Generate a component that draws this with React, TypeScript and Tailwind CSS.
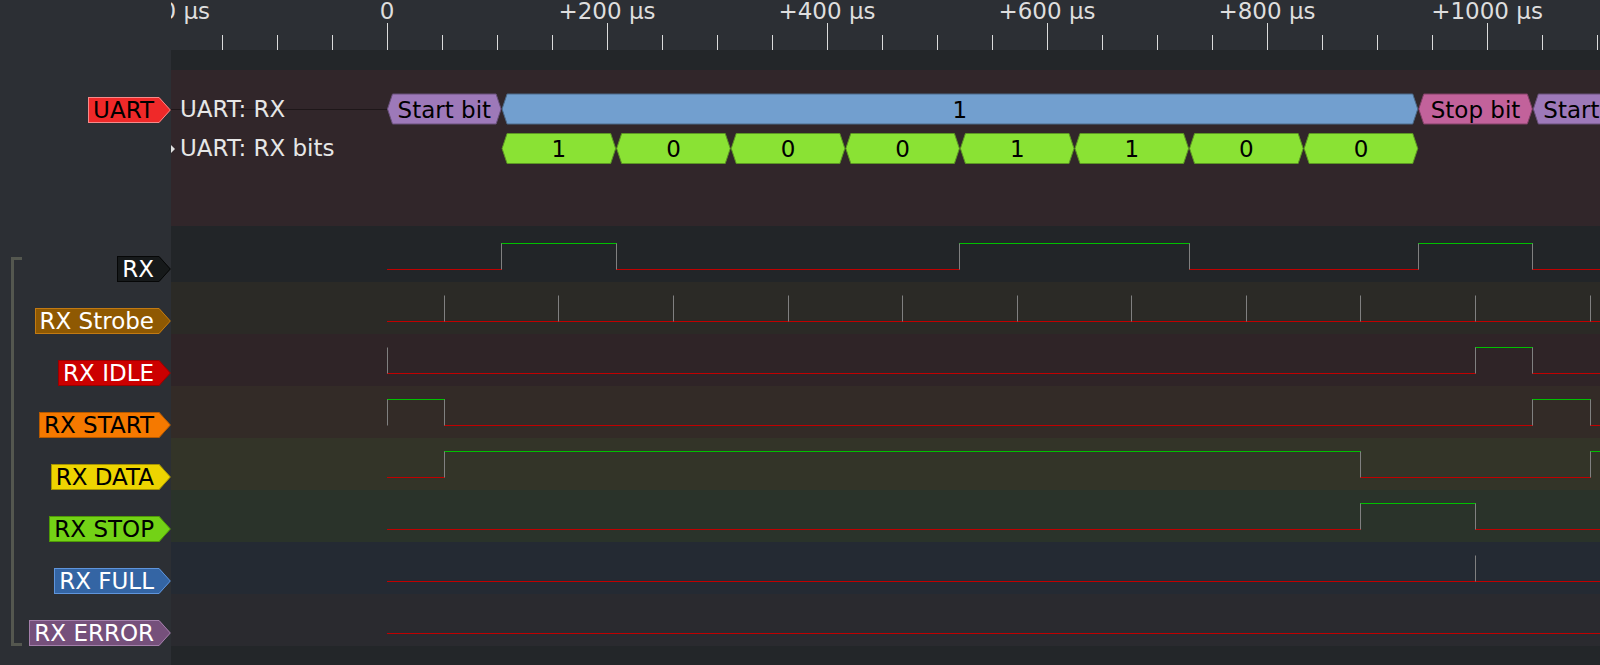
import React from 'react'

// time base: 0 µs at x=387, 1.1 px per µs, 9600 baud
const X0 = 387
const T = 114.583
const bx = (k: number) => X0 + k * T
const sx = (k: number) => X0 + T / 2 + k * T
const px = (x: number) => Math.floor(x) + 0.5
const END = 1600

type Level = [number, 0 | 1]

type Signal = {
    name: string
    fill: string
    border: string
    text: string
    rowBg: string
    h: number
    levels: Level[]
    edges?: number[]
}

const signals: Signal[] = [
    {
        name: 'RX', fill: 'bg-[#16191a]', border: 'border-[#060707]', text: 'text-white', rowBg: 'bg-[#222528]', h: 56,
        levels: [[X0, 0], [bx(1), 1], [bx(2), 0], [bx(5), 1], [bx(7), 0], [bx(9), 1], [bx(10), 0]],
    },
    {
        name: 'RX Strobe', fill: 'bg-[#8f5902]', border: 'border-[#c27a12]', text: 'text-white', rowBg: 'bg-[#2b2a26]', h: 52,
        levels: [[X0, 0]], edges: Array.from({ length: 11 }, (_, i) => sx(i)),
    },
    {
        name: 'RX IDLE', fill: 'bg-[#cc0000]', border: 'border-[#990000]', text: 'text-white', rowBg: 'bg-[#2f2427]', h: 52,
        levels: [[X0, 0], [sx(9), 1], [bx(10), 0]], edges: [X0],
    },
    {
        name: 'RX START', fill: 'bg-[#f57900]', border: 'border-[#b85a00]', text: 'text-black', rowBg: 'bg-[#332b27]', h: 52,
        levels: [[X0, 1], [sx(0), 0], [bx(10), 1], [sx(10), 0]], edges: [X0],
    },
    {
        name: 'RX DATA', fill: 'bg-[#edd400]', border: 'border-[#a69400]', text: 'text-black', rowBg: 'bg-[#333428]', h: 52,
        levels: [[X0, 0], [sx(0), 1], [sx(8), 0], [sx(10), 1]],
    },
    {
        name: 'RX STOP', fill: 'bg-[#73d216]', border: 'border-[#4e9a06]', text: 'text-black', rowBg: 'bg-[#2a332a]', h: 52,
        levels: [[X0, 0], [sx(8), 1], [sx(9), 0]],
    },
    {
        name: 'RX FULL', fill: 'bg-[#3465a4]', border: 'border-[#5f95dc]', text: 'text-white', rowBg: 'bg-[#242a33]', h: 52,
        levels: [[X0, 0]], edges: [sx(9)],
    },
    {
        name: 'RX ERROR', fill: 'bg-[#75507b]', border: 'border-[#a47fab]', text: 'text-white', rowBg: 'bg-[#2a2a2f]', h: 52,
        levels: [[X0, 0]],
    },
]

const Label: React.FC<{ name: string; fill: string; border: string; text: string; arrow: string; stroke: string }> = ({ name, fill, border, text, arrow, stroke }) => (
    <div className="flex h-[26px]">
        <div className={`flex items-center border border-r-0 pl-[4px] pr-[5px] text-[23px] leading-[23px] ${fill} ${border} ${text}`}>
            {name}
        </div>
        <svg width="12" height="26" viewBox="0 0 12 26" className="block">
            <polygon points="0,0 11.5,13 0,26" fill={arrow} />
            <polyline points="0,0.5 11.3,13 0,25.5" fill="none" stroke={stroke} strokeWidth="1" />
        </svg>
    </div>
)

const hexColour: Record<string, [string, string]> = {
    'bg-[#16191a]': ['#16191a', '#060707'],
    'bg-[#8f5902]': ['#8f5902', '#c27a12'],
    'bg-[#cc0000]': ['#cc0000', '#990000'],
    'bg-[#f57900]': ['#f57900', '#b85a00'],
    'bg-[#edd400]': ['#edd400', '#a69400'],
    'bg-[#73d216]': ['#73d216', '#4e9a06'],
    'bg-[#3465a4]': ['#3465a4', '#5f95dc'],
    'bg-[#75507b]': ['#75507b', '#a47fab'],
}

const Wave: React.FC<{ s: Signal }> = ({ s }) => {
    const lo = s.h - 13 + 0.5
    const hi = s.h - 39 + 0.5
    const lines: React.ReactNode[] = []
    s.levels.forEach(([x, lvl], i) => {
        const x1 = i + 1 < s.levels.length ? s.levels[i + 1][0] : END
        const y = lvl ? hi : lo
        lines.push(<line key={'l' + i} x1={Math.floor(x)} x2={Math.floor(x1) + 1} y1={y} y2={y} stroke={lvl ? '#00c000' : '#c00000'} />)
        if (i > 0) lines.push(<line key={'e' + i} x1={px(x)} x2={px(x)} y1={hi} y2={lo} stroke="#808080" />)
    })
    ;(s.edges ?? []).forEach((x, i) => {
        lines.push(<line key={'s' + i} x1={px(x)} x2={px(x)} y1={hi} y2={lo} stroke="#808080" />)
    })
    return (
        <svg width="1429" height={s.h} viewBox={`171 0 1429 ${s.h}`} className="block">
            {lines}
        </svg>
    )
}

type Ann = { x0: number; x1: number; label: string; fill: string; stroke: string }

const row1: Ann[] = [
    { x0: bx(0), x1: bx(1), label: 'Start bit', fill: '#9d79b9', stroke: '#69517b' },
    { x0: bx(1), x1: bx(9), label: '1', fill: '#729fcf', stroke: '#4c6a8a' },
    { x0: bx(9), x1: bx(10), label: 'Stop bit', fill: '#c2629b', stroke: '#814167' },
    { x0: bx(10), x1: bx(11), label: 'Start bit', fill: '#9d79b9', stroke: '#69517b' },
]

const bits = [1, 0, 0, 0, 1, 1, 0, 0]
const row2: Ann[] = bits.map((b, i) => ({ x0: bx(1 + i), x1: bx(2 + i), label: String(b), fill: '#8ae234', stroke: '#5c9723' }))

const Annotation: React.FC<{ a: Ann; cy: number }> = ({ a, cy }) => {
    const l = a.x0 + 0.5
    const r = a.x1 - 0.5
    const t = cy - 15
    const b = cy + 15
    return (
        <g>
            <polygon
                points={`${l},${cy} ${l + 5},${t} ${r - 5},${t} ${r},${cy} ${r - 5},${b} ${l + 5},${b}`}
                fill={a.fill}
                stroke={a.stroke}
                strokeWidth="1"
            />
            <text x={(a.x0 + a.x1) / 2} y={cy + 8.5} textAnchor="middle" fontSize="23" fill="#000" fontFamily="DejaVu Sans">
                {a.label}
            </text>
        </g>
    )
}

const ticks = Array.from({ length: 27 }, (_, i) => i - 4)
const majors = ticks.filter((k) => k % 4 === 0)
const tickLabel = (k: number) => (k === 0 ? '0' : k < 0 ? `-${(-k / 4) * 200} µs` : `+${(k / 4) * 200} µs`)

const App: React.FC = () => {
    return (
        <div className="flex h-[665px] w-[1600px] overflow-hidden bg-[#2c2f34] font-['DejaVu_Sans',sans-serif]">
            {/* header column */}
            <div className="flex w-[171px] shrink-0 flex-col">
                <div className="h-[70px]" />
                <div className="flex h-[156px] justify-end pt-[27px]">
                    <Label name="UART" fill="bg-[#ef2929]" border="border-[#f68a8a]" text="text-black" arrow="#ef2929" stroke="#f68a8a" />
                </div>
                <div className="flex">
                    <div className="mt-[31px] ml-[11px] h-[389px] w-[11px] border-t-[3px] border-b-[3px] border-l-[3px] border-[#54574f]" />
                    <div className="flex flex-1 flex-col">
                        {signals.map((s) => (
                            <div key={s.name} className={`flex items-end justify-end ${s.h === 56 ? 'h-[56px]' : 'h-[52px]'}`}>
                                <Label name={s.name} fill={s.fill} border={s.border} text={s.text} arrow={hexColour[s.fill][0]} stroke={hexColour[s.fill][1]} />
                            </div>
                        ))}
                    </div>
                </div>
            </div>

            {/* trace area */}
            <div className="flex flex-1 flex-col">
                <div className="relative h-[50px] overflow-hidden">
                    <svg width="1429" height="50" viewBox="171 0 1429 50" className="absolute inset-0 block">
                        {ticks.map((k) => {
                            const x = px(X0 + 55 * k)
                            const major = k % 4 === 0
                            return <line key={k} x1={x} x2={x} y1={major ? 23 : 35} y2={50} stroke="#dcdcdc" />
                        })}
                    </svg>
                    {majors.map((k) => (
                        <span
                            key={k}
                            className="absolute top-0 -translate-x-1/2 whitespace-nowrap text-[23px] leading-[23px] text-[#dedede]"
                            style={{ left: X0 + 55 * k - 171 }}
                        >
                            {tickLabel(k)}
                        </span>
                    ))}
                </div>
                <div className="h-[20px] bg-[#232629]" />
                <div className="relative h-[156px] bg-[#31262a]">
                    <svg width="1429" height="156" viewBox="171 0 1429 156" className="absolute inset-0 block">
                        <line x1={171} x2={END} y1={39.5} y2={39.5} stroke="#1e1719" />
                        {row1.map((a, i) => <Annotation key={i} a={a} cy={39} />)}
                        {row2.map((a, i) => <Annotation key={i} a={a} cy={78.5} />)}
                    </svg>
                    <div className="relative flex flex-col gap-[16.5px] pt-[27.5px] text-[23px] leading-[23px] text-[#e6e6e6]">
                        <div className="pl-[9px]">UART: RX</div>
                        <div className="flex items-center">
                            <svg width="5" height="8" viewBox="0 0 5 8" className="block">
                                <polygon points="0,0 4,4 0,8" fill="#e0e0e0" />
                            </svg>
                            <span className="ml-[4px]">UART: RX bits</span>
                        </div>
                    </div>
                </div>
                {signals.map((s) => (
                    <div key={s.name} className={s.rowBg}>
                        <Wave s={s} />
                    </div>
                ))}
                <div className="flex-1 bg-[#232629]" />
            </div>
        </div>
    )
}

export default App
